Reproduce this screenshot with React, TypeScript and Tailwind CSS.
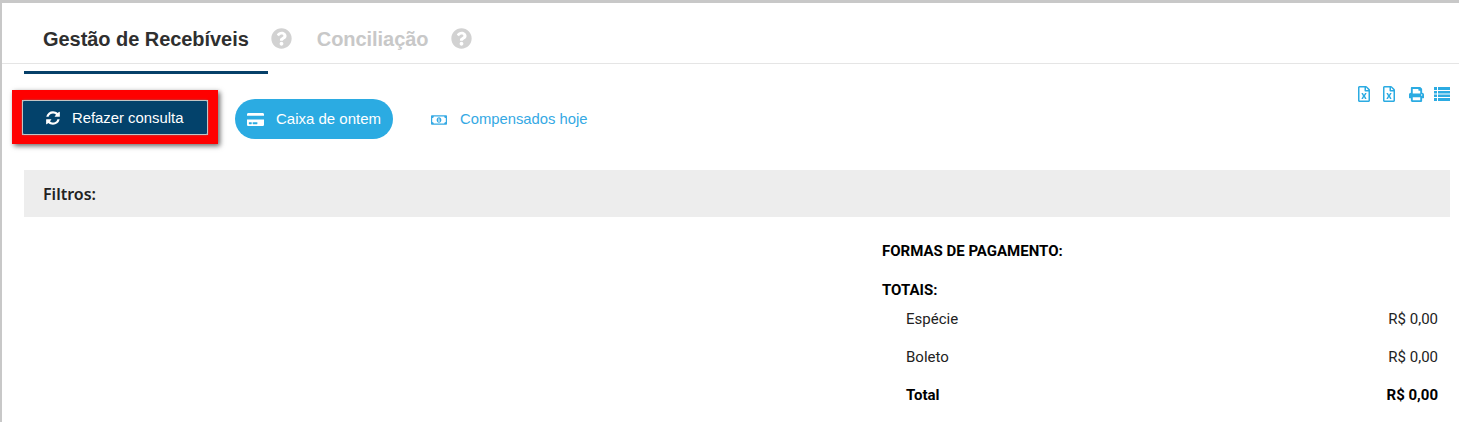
import React from "react";
import { FaQuestionCircle, FaCreditCard, FaRegMoneyBillAlt, FaRegFileExcel, FaPrint } from "react-icons/fa";

const RefreshIcon = () => (
    <svg viewBox="0 0 1792 1792" className="h-[16px] w-[16px]" fill="currentColor">
        <path d="M1639 1056q0 5-1 7-64 268-268 434.500t-478 166.500q-146 0-282.500-55t-243.500-157l-129 129q-19 19-45 19t-45-19-19-45v-448q0-26 19-45t45-19h448q26 0 45 19t19 45-19 45l-137 137q71 66 161 102t187 36q134 0 250-65t186-179q11-17 53-117 8-23 30-23h192q13 0 22.500 9.500t9.500 22.500zm25-800v448q0 26-19 45t-45 19h-448q-26 0-45-19t-19-45 19-45l138-138q-148-137-349-137-134 0-250 65t-186 179q-11 17-53 117-8 23-30 23h-199q-13 0-22.500-9.500t-9.500-22.500v-7q65-268 270-434.500t480-166.500q146 0 284 55.500t245 156.500l130-129q19-19 45-19t45 19 19 45z" />
    </svg>
);

const ListIcon = () => (
    <svg viewBox="0 0 16 14" className="h-[14px] w-[16px]" fill="currentColor">
        <rect x="0" y="0" width="3" height="3" />
        <rect x="4" y="0" width="12" height="3" />
        <rect x="0" y="4" width="3" height="2.500" />
        <rect x="4" y="4" width="12" height="2.500" />
        <rect x="0" y="7.500" width="3" height="2.500" />
        <rect x="4" y="7.500" width="12" height="2.500" />
        <rect x="0" y="11" width="3" height="3" />
        <rect x="4" y="11" width="12" height="3" />
    </svg>
);

const App: React.FC = () => {
    const totals = [
        { label: "Espécie", value: "R$ 0,00", bold: false },
        { label: "Boleto", value: "R$ 0,00", bold: false },
        { label: "Total", value: "R$ 0,00", bold: true },
    ];

    return (
        <div className="h-[422px] w-[1459px] overflow-hidden bg-white border-t-[3px] border-l-2 border-[#c8c8c8] font-['Liberation_Sans',sans-serif]">
            <div className="flex h-[61px] items-center border-b border-[#e5e5e5] pl-[41px] pt-[11px] font-bold text-[20px] tracking-[-0.05px]">
                <span className="text-[#2f2f2f]">Gestão de Recebíveis</span>
                <FaQuestionCircle className="ml-[22px] text-[#d2d2d2] text-[21px]" />
                <span className="ml-[25px] text-[#c8c8c8]">Conciliação</span>
                <FaQuestionCircle className="ml-[22px] text-[#d2d2d2] text-[21px]" />
            </div>
            <div className="ml-[22px] mt-[7px] h-[3px] w-[244px] bg-[#064069]" />

            <div className="relative mt-[16px] ml-[10px] flex items-center">
                <div className="border-[10px] border-b-[9px] border-[#ff0000] shadow-[2px_2px_5px_rgba(0,0,0,0.6)]">
                    <button className="flex h-[35px] w-[186px] items-center rounded-[2px] border border-[#c4c4c4] bg-[#03426b] pl-[22px] pt-[1px] text-[14.85px] text-white shadow-[0_0_2px_#777]">
                        <RefreshIcon />
                        <span className="ml-[11px]">Refazer consulta</span>
                    </button>
                </div>
                <button className="ml-[17px] mt-[4px] flex h-[40px] w-[158px] items-center rounded-full bg-[#2babe2] pl-[12px] pt-[1px] text-[15px] text-white">
                    <FaCreditCard className="text-[17px]" />
                    <span className="ml-[12px]">Caixa de ontem</span>
                </button>
                <button className="ml-[38px] mt-[4px] flex items-center pt-[1px] text-[14.8px] text-[#35a9e4]">
                    <FaRegMoneyBillAlt className="text-[16px]" />
                    <span className="ml-[13px]">Compensados hoje</span>
                </button>
                <div className="absolute right-[9px] top-[-4px] flex items-center gap-[9px] text-[#2babe2] text-[16px]">
                    <FaRegFileExcel />
                    <FaRegFileExcel />
                    <FaPrint className="ml-[3px] mr-[1px] text-[15px]" />
                    <ListIcon />
                </div>
            </div>

            <div className="ml-[22px] mr-[9px] mt-[26px] flex h-[47px] items-center bg-[#ededed] pl-[19px] font-['Noto_Sans',sans-serif] text-[16px] font-semibold text-[#222]">
                Filtros:
            </div>

            <div className="ml-[880px] mr-[21px] mt-[25px] font-['Roboto',sans-serif] text-[15px] text-[#222]">
                <div className="font-bold text-black leading-[18px]">FORMAS DE PAGAMENTO:</div>
                <div className="mt-[21px] font-bold text-black leading-[18px]">TOTAIS:</div>
                <div className="mt-[1px]">
                    {totals.map((row) => (
                        <div
                            key={row.label}
                            className={`flex h-[38px] items-center justify-between pl-[24px] ${row.bold ? "font-bold text-black" : ""}`}
                        >
                            <span>{row.label}</span>
                            <span>{row.value}</span>
                        </div>
                    ))}
                </div>
            </div>
        </div>
    );
};

export default App;
